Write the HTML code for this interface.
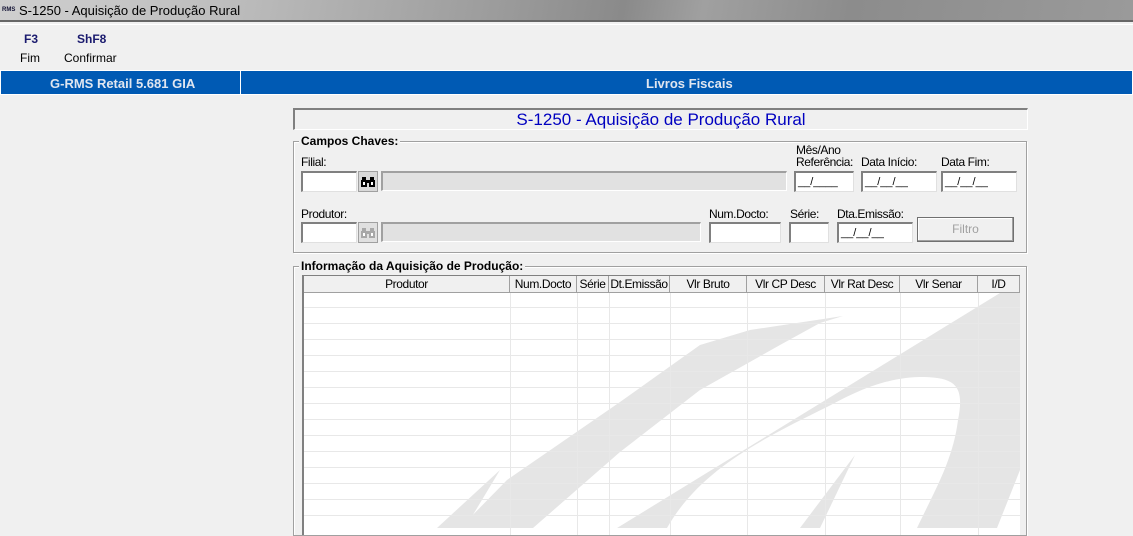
<!DOCTYPE html>
<html><head><meta charset="utf-8"><style>
*{margin:0;padding:0;box-sizing:border-box}
body{width:1133px;height:528px;overflow:hidden;background:#f0f0f0;font-family:"Liberation Sans",sans-serif;font-size:11px;color:#000;position:relative}
.a{position:absolute}
.tb{left:0;top:0;width:1133px;height:22px;background:linear-gradient(100deg,#cfcfcf 0%,#bdbdbd 20%,#9a9a9a 45%,#8a8a8a 55%,#a0a0a0 62%,#8c8c8c 75%,#9a9a9a 100%);border-bottom:2px solid #666}
.lbl{font-family:"Liberation Sans",sans-serif;font-size:12px;letter-spacing:-0.4px}
.inp{background:#fff;border-top:2px solid #808080;border-left:2px solid #808080;border-bottom:1px solid #e0e0e0;border-right:1px solid #e0e0e0;font-size:11px;padding:3px 0 0 2px;color:#000}
.dis{background:#e1e1e1;border-top:2px solid #a0a0a0;border-left:2px solid #a0a0a0;border-bottom:1px solid #fff;border-right:1px solid #fff}
.grp{border:1px solid #a0a0a0;box-shadow:inset 1px 1px 0 #fff,1px 1px 0 #fff}
.gt{background:#f0f0f0;font-weight:bold;font-size:12px;padding:0 2px}
.btn{border:1px solid #707070;box-shadow:inset -1px -1px 0 #a0a0a0,inset 1px 1px 0 #fff;background:#f0f0f0;color:#a0a0a0;text-align:center;line-height:22px;font-size:12px}
.th{top:276px;height:17px;border-right:1px solid #a0a0a0;border-bottom:1px solid #a0a0a0;text-align:center;font-size:12px;line-height:16px;letter-spacing:-0.4px;background:#f0f0f0}
.bino{width:20px;height:21px;border:1px solid #a0a0a0;background:#d8d8d8}
</style></head><body>
<div class="a tb"></div>
<div class="a" style="left:2px;top:7px;font-size:6px;font-weight:bold;color:#113">RMS</div>
<div class="a" style="left:19px;top:3px;font-size:13px;color:#000">S-1250 - Aquisição de Produção Rural</div>
<div class="a" style="left:0;top:24px;width:1133px;height:1px;background:#fff"></div>
<div class="a" style="left:24px;top:32px;font-weight:bold;color:#1a1a6e;font-size:12px">F3</div>
<div class="a" style="left:77px;top:32px;font-weight:bold;color:#1a1a6e;font-size:12px">ShF8</div>
<div class="a" style="left:20px;top:51px;font-size:12px">Fim</div>
<div class="a" style="left:64px;top:51px;font-size:12px">Confirmar</div>
<div class="a" style="left:0;top:70px;width:1133px;height:25px;background:#005ab4;border:1px solid #fff"></div>
<div class="a" style="left:240px;top:70px;width:1px;height:25px;background:#fff"></div>
<div class="a" style="left:50px;top:76px;color:#e0e6f0;font-weight:bold;font-size:13px">G-RMS Retail 5.681 GIA</div>
<div class="a" style="left:646px;top:76px;color:#e0e6f0;font-weight:bold;font-size:13px">Livros Fiscais</div>

<div class="a" style="left:293px;top:108px;width:735px;height:22px;border-top:2px solid #808080;border-left:2px solid #808080;border-bottom:1px solid #fff;border-right:1px solid #fff;text-align:center;color:#0000c0;font-size:17px;line-height:19px">S-1250 - Aquisição de Produção Rural</div>

<div class="a grp" style="left:293px;top:141px;width:734px;height:112px"></div>
<div class="a gt" style="left:299px;top:134px">Campos Chaves:</div>
<div class="a lbl" style="left:301px;top:155px">Filial:</div>
<div class="a inp" style="left:301px;top:171px;width:56px;height:21px"></div>
<div class="a bino" style="left:358px;top:171px"><svg width="18" height="19" viewBox="0 0 18 19"><g fill="#000"><rect x="3" y="5" width="4" height="4"/><rect x="11" y="5" width="4" height="4"/><rect x="2" y="8" width="6" height="7"/><rect x="10" y="8" width="6" height="7"/><rect x="7" y="8" width="4" height="3"/></g><rect x="4" y="10" width="2" height="3" fill="#fff"/><rect x="12" y="10" width="2" height="3" fill="#fff"/></svg></div>
<div class="a dis" style="left:381px;top:171px;width:406px;height:20px"></div>
<div class="a lbl" style="left:796px;top:143px">Mês/Ano</div>
<div class="a lbl" style="left:796px;top:155px">Referência:</div>
<div class="a lbl" style="left:861px;top:155px">Data Início:</div>
<div class="a lbl" style="left:941px;top:155px">Data Fim:</div>
<div class="a inp" style="left:794px;top:171px;width:60px;height:21px">__/____</div>
<div class="a inp" style="left:861px;top:171px;width:76px;height:21px">__/__/__</div>
<div class="a inp" style="left:941px;top:171px;width:76px;height:21px">__/__/__</div>

<div class="a lbl" style="left:301px;top:207px">Produtor:</div>
<div class="a inp" style="left:301px;top:222px;width:56px;height:21px"></div>
<div class="a bino" style="left:358px;top:222px;background:#e0e0e0"><svg width="18" height="19" viewBox="0 0 18 19"><g fill="#a8a8a8"><rect x="3" y="5" width="4" height="4"/><rect x="11" y="5" width="4" height="4"/><rect x="2" y="8" width="6" height="7"/><rect x="10" y="8" width="6" height="7"/><rect x="7" y="8" width="4" height="3"/></g><rect x="4" y="10" width="2" height="3" fill="#fff"/><rect x="12" y="10" width="2" height="3" fill="#fff"/></svg></div>
<div class="a dis" style="left:381px;top:222px;width:320px;height:20px"></div>
<div class="a lbl" style="left:709px;top:207px">Num.Docto:</div>
<div class="a lbl" style="left:790px;top:207px">Série:</div>
<div class="a lbl" style="left:837px;top:207px">Dta.Emissão:</div>
<div class="a inp" style="left:709px;top:222px;width:72px;height:21px"></div>
<div class="a inp" style="left:789px;top:222px;width:40px;height:21px"></div>
<div class="a inp" style="left:837px;top:222px;width:76px;height:21px">__/__/__</div>
<div class="a btn" style="left:917px;top:217px;width:97px;height:25px">Filtro</div>

<div class="a grp" style="left:293px;top:266px;width:734px;height:270px"></div>
<div class="a gt" style="left:299px;top:259px">Informação da Aquisição de Produção:</div>
<div class="a" style="left:302px;top:275px;width:718px;height:260px;background:#fff;border-top:1px solid #808080;border-left:2px solid #808080;overflow:hidden">
<svg width="718" height="260" style="position:absolute;left:-2px;top:-1px">
<g fill="#e5e5e5" transform="translate(-302,-275)">
<path d="M617 528 L1000 293 L1020 293 L1020 470 L997 528 L917 528 C935 490 953 460 958 420 C965 385 955 377 920 377 C880 378 850 395 827 407 C760 440 700 470 667 528 Z"/>
<path d="M460 528 L507 480 L620 402 L700 345 L750 330 L843 316 L820 323 L780 345 L700 390 L620 452 L533 528 Z"/>
<path d="M437 528 L500 470 L465 528 Z"/>
<path d="M800 528 L855 455 L820 528 Z"/>
</g>
<g stroke="#e8e8e8" stroke-width="1">
<line x1="0" y1="32.5" x2="718" y2="32.5"/><line x1="0" y1="48.5" x2="718" y2="48.5"/><line x1="0" y1="64.5" x2="718" y2="64.5"/><line x1="0" y1="80.5" x2="718" y2="80.5"/><line x1="0" y1="96.5" x2="718" y2="96.5"/><line x1="0" y1="112.5" x2="718" y2="112.5"/><line x1="0" y1="128.5" x2="718" y2="128.5"/><line x1="0" y1="144.5" x2="718" y2="144.5"/><line x1="0" y1="160.5" x2="718" y2="160.5"/><line x1="0" y1="176.5" x2="718" y2="176.5"/><line x1="0" y1="192.5" x2="718" y2="192.5"/><line x1="0" y1="208.5" x2="718" y2="208.5"/><line x1="0" y1="224.5" x2="718" y2="224.5"/><line x1="0" y1="240.5" x2="718" y2="240.5"/>
<line x1="208.5" y1="0" x2="208.5" y2="260"/><line x1="275.5" y1="0" x2="275.5" y2="260"/><line x1="307.5" y1="0" x2="307.5" y2="260"/><line x1="368.5" y1="0" x2="368.5" y2="260"/><line x1="445.5" y1="0" x2="445.5" y2="260"/><line x1="523.5" y1="0" x2="523.5" y2="260"/><line x1="598.5" y1="0" x2="598.5" y2="260"/><line x1="676.5" y1="0" x2="676.5" y2="260"/>
</g></svg>
</div>
<div class="a th" style="left:304px;width:206px">Produtor</div>
<div class="a th" style="left:510px;width:67px">Num.Docto</div>
<div class="a th" style="left:577px;width:32px">Série</div>
<div class="a th" style="left:609px;width:61px">Dt.Emissão</div>
<div class="a th" style="left:670px;width:77px">Vlr Bruto</div>
<div class="a th" style="left:747px;width:78px">Vlr CP Desc</div>
<div class="a th" style="left:825px;width:75px">Vlr Rat Desc</div>
<div class="a th" style="left:900px;width:78px">Vlr Senar</div>
<div class="a th" style="left:978px;width:42px">I/D</div>
</body></html>
